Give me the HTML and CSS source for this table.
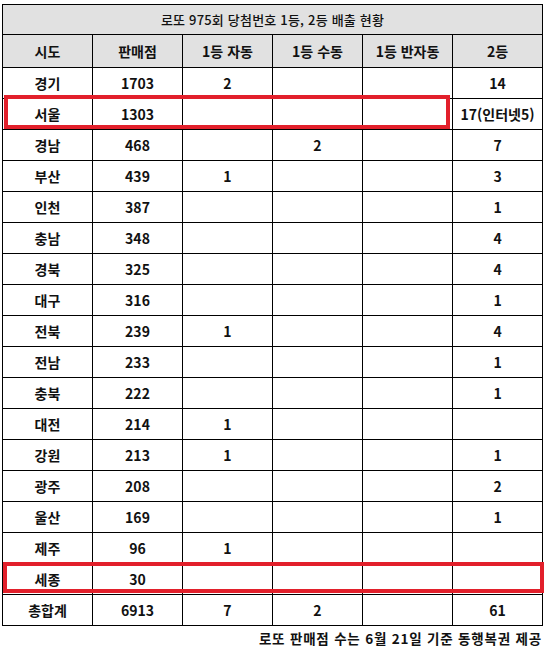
FILE: index.html
```html
<!DOCTYPE html>
<html lang="ko">
<head>
<meta charset="utf-8">
<link rel="stylesheet" href="styles.css">
</head>
<body>
<div class="wrap">
  <table class="lotto">
    <colgroup>
      <col class="c"><col class="c"><col class="c"><col class="c"><col class="c"><col class="c">
    </colgroup>
    <thead>
      <tr class="title"><th colspan="6">로또 975회 당첨번호 1등, 2등 배출 현황</th></tr>
      <tr class="head"><th>시도</th><th>판매점</th><th>1등 자동</th><th>1등 수동</th><th>1등 반자동</th><th>2등</th></tr>
    </thead>
    <tbody>
      <tr><td>경기</td><td>1703</td><td>2</td><td></td><td></td><td>14</td></tr>
      <tr><td>서울</td><td>1303</td><td></td><td></td><td></td><td>17(인터넷5)</td></tr>
      <tr><td>경남</td><td>468</td><td></td><td>2</td><td></td><td>7</td></tr>
      <tr><td>부산</td><td>439</td><td>1</td><td></td><td></td><td>3</td></tr>
      <tr><td>인천</td><td>387</td><td></td><td></td><td></td><td>1</td></tr>
      <tr><td>충남</td><td>348</td><td></td><td></td><td></td><td>4</td></tr>
      <tr><td>경북</td><td>325</td><td></td><td></td><td></td><td>4</td></tr>
      <tr><td>대구</td><td>316</td><td></td><td></td><td></td><td>1</td></tr>
      <tr><td>전북</td><td>239</td><td>1</td><td></td><td></td><td>4</td></tr>
      <tr><td>전남</td><td>233</td><td></td><td></td><td></td><td>1</td></tr>
      <tr><td>충북</td><td>222</td><td></td><td></td><td></td><td>1</td></tr>
      <tr><td>대전</td><td>214</td><td>1</td><td></td><td></td><td></td></tr>
      <tr><td>강원</td><td>213</td><td>1</td><td></td><td></td><td>1</td></tr>
      <tr><td>광주</td><td>208</td><td></td><td></td><td></td><td>2</td></tr>
      <tr><td>울산</td><td>169</td><td></td><td></td><td></td><td>1</td></tr>
      <tr><td>제주</td><td>96</td><td>1</td><td></td><td></td><td></td></tr>
      <tr><td>세종</td><td>30</td><td></td><td></td><td></td><td></td></tr>
      <tr><td>총합계</td><td>6913</td><td>7</td><td>2</td><td></td><td>61</td></tr>
    </tbody>
  </table>
  <div class="mark mark-seoul"></div>
  <div class="mark mark-sejong"></div>
  <p class="note">로또 판매점 수는 6월 21일 기준 동행복권 제공</p>
</div>
</body>
</html>
```
FILE: styles.css
```css
html, body {
  margin: 0;
  padding: 0;
  background: #ffffff;
}
body {
  font-family: "Noto Sans CJK KR", "Noto Sans", sans-serif;
  color: #111111;
}
.wrap {
  position: relative;
  padding: 4px 0 0 2px;
  width: 546px;
  height: 649px;
  box-sizing: border-box;
  overflow: hidden;
}
.lotto {
  border-collapse: collapse;
  table-layout: fixed;
  width: 541px;
}
.lotto .c {
  width: 90px;
}
.lotto th,
.lotto td {
  border: 1px solid #000000;
  text-align: center;
  vertical-align: middle;
  padding: 0;
  font-size: 14px;
  font-weight: 700;
  line-height: 16px;
  white-space: nowrap;
}
.lotto td {
  height: 30px;
}
.title th {
  height: 29px;
  background: #e1e1e1;
  font-weight: 500;
  font-size: 13px;
  letter-spacing: 0.2px;
}
.head th {
  height: 32px;
  background: #e1e1e1;
}
.mark {
  position: absolute;
  border: 4px solid #e2202b;
  box-sizing: border-box;
  pointer-events: none;
}
.mark-seoul {
  left: 4px;
  top: 95px;
  width: 446px;
  height: 34px;
}
.mark-sejong {
  left: 3px;
  top: 562px;
  width: 541px;
  height: 31px;
}
.note {
  margin: 4px 4px 0 0;
  text-align: right;
  font-size: 13.5px;
  font-weight: 700;
  line-height: 16px;
  letter-spacing: 0.8px;
}
```
